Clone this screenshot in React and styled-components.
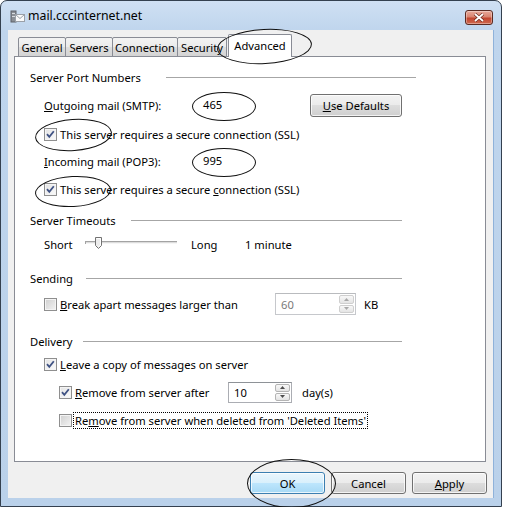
import React from "react";
import styled, { createGlobalStyle } from "styled-components";

const GlobalStyle = createGlobalStyle`
  html, body {
    margin: 0;
    padding: 0;
    background: #fff;
  }
  body {
    font-family: "Segoe UI", "Noto Sans", sans-serif;
    font-size: 11.2px;
    color: #000;
  }
`;

// window chrome
const Window = styled.div`
  width: 502px;
  height: 507px;
  box-sizing: border-box;
  display: flex;
  flex-direction: column;
  border: 1px solid #34404f;
  border-radius: 7px 7px 0 0;
  background: linear-gradient(to bottom, #cfe0f3 0, #bfd5ed 30px, #bad1ea 100%);
  padding: 0 7px 8px 7px;
`;

const TitleBar = styled.div`
  height: 29px;
  flex-shrink: 0;
  display: flex;
  align-items: center;
`;

const AppIcon = styled.svg`
  margin-left: 2px;
  margin-right: 2px;
  flex-shrink: 0;
`;

const TitleText = styled.span`
  flex: 1;
  font-size: 12.3px;
  color: #000;
`;

const CloseButton = styled.div`
  align-self: flex-start;
  margin-top: 9px;
  margin-right: 1px;
  width: 28px;
  height: 15px;
  box-sizing: border-box;
  border: 1px solid #5a2a22;
  border-radius: 3px;
  background: linear-gradient(to bottom, #e8a99a 0%, #d98470 45%, #c2452f 55%, #cf6a50 100%);
  box-shadow: inset 0 0 0 1px rgba(255, 255, 255, 0.35);
  display: flex;
  align-items: center;
  justify-content: center;
`;

const Client = styled.div`
  flex: 1;
  display: flex;
  flex-direction: column;
  background: #f0f0f0;
  padding: 4px 7px 0 6px;
  border-right: 1px solid #8fb2da;
`;

// tabs
const TabStrip = styled.div`
  position: relative;
  z-index: 2;
  height: 23px;
  margin-bottom: -1px;
  padding-left: 4px;
  display: flex;
  align-items: flex-end;
`;

const Tab = styled.div`
  position: relative;
  box-sizing: border-box;
  width: ${(p) => p.$w}px;
  height: ${(p) => (p.$active ? 23 : 20)}px;
  margin-left: ${(p) => (p.$active ? 1 : p.$first ? 0 : -1)}px;
  border: 1px solid #898c95;
  border-bottom: ${(p) => (p.$active ? "none" : "1px solid #898c95")};
  border-radius: 2px 2px 0 0;
  background: ${(p) =>
    p.$active ? "#fff" : "linear-gradient(to bottom, #f3f3f3 0%, #ebebeb 50%, #dedede 50%, #d4d4d4 100%)"};
  display: flex;
  align-items: center;
  justify-content: center;
  padding-bottom: ${(p) => (p.$active ? 2 : 0)}px;
  white-space: nowrap;
`;

const Panel = styled.div`
  height: 406px;
  box-sizing: border-box;
  border: 1px solid #898c95;
  background: #fff;
  padding: 9px 0 0 15px;
  display: flex;
  flex-direction: column;
`;

// group boxes
const GroupHeader = styled.div`
  height: 22px;
  width: ${(p) => p.$w}px;
  margin-top: ${(p) => p.$mt || 0}px;
  display: flex;
  align-items: center;
  white-space: nowrap;
`;

const GroupLine = styled.div`
  flex: 1;
  height: 1px;
  margin-left: ${(p) => p.$gap}px;
  background: #a6a6a6;
  box-shadow: 0 1px 0 #fff;
`;

const Row = styled.div`
  height: 22px;
  margin-top: ${(p) => p.$mt || 0}px;
  padding-left: ${(p) => p.$indent || 0}px;
  display: flex;
  align-items: center;
  white-space: nowrap;
`;

const Label = styled.span`
  width: ${(p) => (p.$w ? `${p.$w}px` : "auto")};
  flex-shrink: 0;
  margin-left: ${(p) => p.$ml || 0}px;
`;

const PortValue = styled.span`
  position: relative;
  width: 107px;
  height: 22px;
  line-height: 22px;
  flex-shrink: 0;
`;

const Scribble = styled.span`
  position: absolute;
  left: ${(p) => p.$x}px;
  top: ${(p) => p.$y}px;
  width: ${(p) => p.$w}px;
  height: ${(p) => p.$h}px;
  box-sizing: border-box;
  border: 1px solid #111;
  border-radius: 50%;
  transform: rotate(${(p) => p.$r || 0}deg);
  pointer-events: none;
  z-index: 5;
`;

// buttons
const Button = styled.div`
  position: relative;
  box-sizing: border-box;
  width: ${(p) => p.$w}px;
  height: ${(p) => p.$h || 22}px;
  flex-shrink: 0;
  border: 1px solid ${(p) => (p.$primary ? "#3c7fb1" : "#707070")};
  border-radius: 3px;
  background: ${(p) =>
    p.$primary
      ? "linear-gradient(to bottom, #eaf6fd 0%, #d9f0fc 50%, #bee6fd 50%, #a7d9f5 100%)"
      : "linear-gradient(to bottom, #f2f2f2 0%, #ebebeb 50%, #dddddd 50%, #cfcfcf 100%)"};
  box-shadow: inset 0 0 0 1px rgba(255, 255, 255, 0.75);
  display: flex;
  align-items: center;
  justify-content: center;
`;

const Footer = styled.div`
  display: flex;
  justify-content: flex-end;
  gap: 6px;
  padding-top: 10px;
  margin-right: -1px;
`;

// checkbox
const CheckWrap = styled.div`
  display: flex;
  align-items: center;
  width: ${(p) => (p.$w ? `${p.$w}px` : "auto")};
  flex-shrink: 0;
`;

const Box = styled.span`
  position: relative;
  width: 13px;
  height: 13px;
  box-sizing: border-box;
  flex-shrink: 0;
  border: 1px solid #8f8f8f;
  background: ${(p) =>
    p.$checked ? "linear-gradient(135deg, #e3e3e3, #fbfbfb)" : "linear-gradient(135deg, #cfcfcf, #f4f4f4)"};
  box-shadow: inset 0 0 0 1px #f4f4f4;
  margin-right: ${(p) => p.$gap ?? 3}px;
`;

const FocusLabel = styled.span`
  border: 1px dotted #000;
  padding: 0 1px;
  line-height: 15px;
`;

// spin box
const SpinBox = styled.div`
  box-sizing: border-box;
  width: ${(p) => p.$w}px;
  height: ${(p) => p.$h}px;
  flex-shrink: 0;
  border: 1px solid ${(p) => (p.$disabled ? "#c6c8cc" : "#abadb3")};
  border-top-color: ${(p) => (p.$disabled ? "#b9bbbe" : "#8e9297")};
  background: #fff;
  display: flex;
  align-items: stretch;
  padding: 1px;
`;

const SpinText = styled.span`
  flex: 1;
  padding-left: 4px;
  display: flex;
  align-items: center;
  color: ${(p) => (p.$disabled ? "#7a7a7a" : "#000")};
`;

const SpinButtons = styled.div`
  width: 15px;
  display: flex;
  flex-direction: column;
  gap: 1px;
`;

const SpinButton = styled.div`
  flex: 1;
  box-sizing: border-box;
  border: 1px solid ${(p) => (p.$disabled ? "#cfcfcf" : "#b4b4b4")};
  border-radius: 2px;
  background: linear-gradient(to bottom, #f8f8f8, #e4e4e4);
  display: flex;
  align-items: center;
  justify-content: center;
`;

const Slider = styled.svg`
  flex-shrink: 0;
  margin-right: 14px;
`;

const Check = ({ checked, gap, children }) => (
  <Box $checked={checked} $gap={gap}>
    {checked && (
      <svg width="11" height="11" viewBox="0 0 11 11" style={{ position: "absolute", left: 0, top: 0 }}>
        <path d="M2 5.2 L4.3 7.8 L8.8 2.2" fill="none" stroke="#3f5283" strokeWidth="1.8" />
      </svg>
    )}
    {children}
  </Box>
);

const Arrow = ({ up, disabled }) => (
  <svg width="5" height="3" viewBox="0 0 5 3">
    <path d={up ? "M0 3 L2.5 0 L5 3 Z" : "M0 0 L2.5 3 L5 0 Z"} fill={disabled ? "#a8a8a8" : "#4d4d4d"} />
  </svg>
);

const Spin = ({ value, w, h, disabled }) => (
  <SpinBox $w={w} $h={h} $disabled={disabled}>
    <SpinText $disabled={disabled}>{value}</SpinText>
    <SpinButtons>
      <SpinButton $disabled={disabled}>
        <Arrow up disabled={disabled} />
      </SpinButton>
      <SpinButton $disabled={disabled}>
        <Arrow disabled={disabled} />
      </SpinButton>
    </SpinButtons>
  </SpinBox>
);

export default function App() {
  return (
    <>
      <GlobalStyle />
      <Window>
        <TitleBar>
          <AppIcon width="16" height="16" viewBox="0 0 16 16">
            <rect x="1" y="3" width="5" height="11" fill="#8a8f96" stroke="#5d6168" />
            <rect x="2" y="5" width="3" height="1" fill="#d8dbe0" />
            <rect x="2" y="8" width="3" height="1" fill="#d8dbe0" />
            <rect x="5.5" y="6.5" width="9" height="7" fill="#fafafa" stroke="#9aa0a8" />
            <path d="M5.5 6.5 L10 10.5 L14.5 6.5" fill="none" stroke="#9aa0a8" />
          </AppIcon>
          <TitleText>mail.cccinternet.net</TitleText>
          <CloseButton>
            <svg width="12" height="9" viewBox="0 0 12 9">
              <path d="M2 1 L10 8 M10 1 L2 8" stroke="#6b2a1f" strokeWidth="3.2" />
              <path d="M2 1 L10 8 M10 1 L2 8" stroke="#fff" strokeWidth="1.8" />
            </svg>
          </CloseButton>
        </TitleBar>

        <Client>
          <TabStrip>
            <Tab $w={48} $first>General</Tab>
            <Tab $w={48}>Servers</Tab>
            <Tab $w={66}>Connection</Tab>
            <Tab $w={50}>Security</Tab>
            <Tab $w={64} $active>
              Advanced
              <Scribble $x={-12} $y={-6} $w={95} $h={35} $r={-3} />
            </Tab>
          </TabStrip>

          <Panel>
            <GroupHeader $w={386}>
              Server Port Numbers
              <GroupLine $gap={25} />
            </GroupHeader>
            <Row $mt={6} $indent={14}>
              <Label $w={159}>
                <u>O</u>utgoing mail (SMTP):
              </Label>
              <PortValue>
                465
                <Scribble $x={-11} $y={-2} $w={64} $h={29} />
              </PortValue>
              <Button $w={92} $h={23}>
                <span>
                  <u>U</u>se Defaults
                </span>
              </Button>
            </Row>
            <Row $mt={7} $indent={14}>
              <Check checked>
                <Scribble $x={-10} $y={-10} $w={77} $h={32} $r={-4} />
              </Check>
              <Label>This server requires a secure connection (SSL)</Label>
            </Row>
            <Row $mt={5} $indent={14}>
              <Label $w={159}>
                <u>I</u>ncoming mail (POP3):
              </Label>
              <PortValue>
                995
                <Scribble $x={-11} $y={-2} $w={64} $h={29} />
              </PortValue>
            </Row>
            <Row $mt={6} $indent={14}>
              <Check checked>
                <Scribble $x={-10} $y={-8} $w={76} $h={31} $r={-3} />
              </Check>
              <Label>
                This server requires a secure <u>c</u>onnection (SSL)
              </Label>
            </Row>

            <GroupHeader $mt={9} $w={372}>
              Server Timeouts
              <GroupLine $gap={15} />
            </GroupHeader>
            <Row $mt={2} $indent={14}>
              <Label $w={41}>Short</Label>
              <Slider width="92" height="16" viewBox="0 0 92 16">
                <rect x="0" y="5" width="92" height="1" fill="#a3a3a3" />
                <rect x="0" y="6" width="92" height="1" fill="#dcdcdc" />
                <rect x="0" y="7" width="92" height="1" fill="#f6f6f6" />
                <rect x="0" y="5" width="1" height="3" fill="#a3a3a3" />
                <path d="M10.5 1.5 H16.5 V9.5 L13.5 12.5 L10.5 9.5 Z" fill="#ececec" stroke="#727272" />
                <path d="M11.5 2.5 H15.5 V9 L13.5 11" fill="none" stroke="#fff" />
              </Slider>
              <Label $w={54}>Long</Label>
              <Label>1 minute</Label>
            </Row>

            <GroupHeader $mt={12} $w={372}>
              Sending
              <GroupLine $gap={13} />
            </GroupHeader>
            <Row $mt={4} $indent={14}>
              <CheckWrap $w={231}>
                <Check />
                <Label>
                  <u>B</u>reak apart messages larger than
                </Label>
              </CheckWrap>
              <Spin value="60" w={81} h={22} disabled />
              <Label $ml={8}>KB</Label>
            </Row>

            <GroupHeader $mt={15} $w={372}>
              Delivery
              <GroupLine $gap={10} />
            </GroupHeader>
            <Row $mt={1} $indent={14}>
              <Check checked />
              <Label>
                <u>L</u>eave a copy of messages on server
              </Label>
            </Row>
            <Row $mt={6} $indent={29}>
              <CheckWrap $w={169}>
                <Check checked />
                <Label>
                  <u>R</u>emove from server after
                </Label>
              </CheckWrap>
              <Spin value="10" w={64} h={21} />
              <Label $ml={10}>day(s)</Label>
            </Row>
            <Row $mt={6} $indent={29}>
              <Check gap={1} />
              <FocusLabel>
                Re<u>m</u>ove from server when deleted from 'Deleted Items'
              </FocusLabel>
            </Row>
          </Panel>

          <Footer>
            <Button $w={75} $primary>
              OK
              <Scribble $x={-4} $y={-14} $w={89} $h={49} />
            </Button>
            <Button $w={75}>Cancel</Button>
            <Button $w={75}>
              <span>
                <u>A</u>pply
              </span>
            </Button>
          </Footer>
        </Client>
      </Window>
    </>
  );
}
